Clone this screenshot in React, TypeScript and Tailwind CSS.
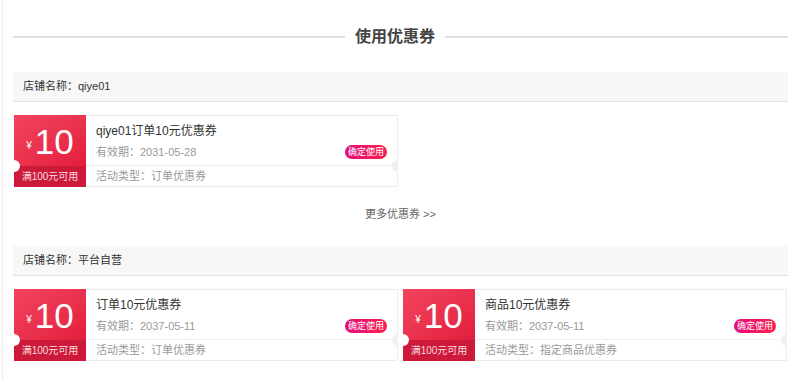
import React from "react";

type Coupon = {
  title: string;
  date: string;
  type: string;
};

const font = "font-['Liberation_Sans','Noto_Sans_CJK_SC',sans-serif]";

const CouponCard = ({ c }: { c: Coupon }) => {
  return (
    <div className="relative flex h-[72px] overflow-hidden">
      {/* red amount block */}
      <div className="flex w-[72px] shrink-0 flex-col">
        <div className="flex h-[51px] items-center justify-center bg-gradient-to-br from-[#f2435f] to-[#e31c3d] pt-[2px] text-white">
          <span className="mr-[3px] mt-[8px] text-[10px]">¥</span>
          <span className="text-[35px] font-light leading-none">10</span>
        </div>
        <div className="flex h-[21px] items-center justify-center bg-[#cd1a3b] text-[10px] text-[#fbd9df]">
          满100元可用
        </div>
      </div>
      {/* info block */}
      <div className="flex flex-1 flex-col border-y border-r border-[#ececec]">
        <div className="flex h-[50px] flex-col border-b border-dotted border-[#dcdcdc] pl-[10px] pr-[10px]">
          <div className="pt-[7px] text-[12px] leading-[16px] text-[#333]">{c.title}</div>
          <div className="mt-[6px] flex items-center justify-between">
            <span className="text-[11px] leading-[14px] text-[#999]">有效期：{c.date}</span>
            <span className="flex h-[14px] w-[42px] items-center justify-center whitespace-nowrap rounded-full bg-gradient-to-r from-[#e4087c] to-[#fd1f48] text-[9px] leading-none text-white">
              确定使用
            </span>
          </div>
        </div>
        <div className="flex flex-1 items-center pl-[10px] text-[11px] text-[#999]">
          活动类型：{c.type}
        </div>
      </div>
      {/* notches */}
      <div className="absolute left-[-6px] top-[45px] h-[12px] w-[12px] rounded-full bg-white" />
      <div className="absolute right-[-6px] top-[45px] h-[12px] w-[12px] rounded-full bg-[#f0f0f0]" />
    </div>
  );
};

const StoreHeader = ({ name }: { name: string }) => (
  <div className="flex h-[30px] items-center border-b border-[#e3e3e3] bg-[#f7f7f7] pl-[10px] text-[11px] text-[#333]">
    店铺名称：{name}
  </div>
);

const App = () => {
  return (
    <div className={`min-h-[381px] w-[800px] bg-white ${font}`}>
      <div className="ml-[2px] min-h-[381px] border-l border-[#ececec] pl-[10px]">
        <div className="w-[775px]">
          {/* title */}
          <div className="flex items-center pt-[26px]">
            <div className="h-[2px] flex-1 bg-[#e0e0e0]" />
            <div className="px-[10px] text-[16px] font-bold leading-[22px] text-[#444]">使用优惠券</div>
            <div className="h-[2px] w-[343px] bg-[#e0e0e0]" />
          </div>

          {/* store 1 */}
          <div className="mt-[24px]">
            <StoreHeader name="qiye01" />
          </div>
          <div className="mt-[13px] grid grid-cols-2 gap-[5px] px-[1px]">
            <CouponCard c={{ title: "qiye01订单10元优惠券", date: "2031-05-28", type: "订单优惠券" }} />
          </div>

          <div className="pb-[24px] pt-[19px] text-center text-[11px] leading-[16px] text-[#666]">
            更多优惠券 &gt;&gt;
          </div>

          {/* store 2 */}
          <StoreHeader name="平台自营" />
          <div className="mt-[13px] grid grid-cols-2 gap-[5px] px-[1px]">
            <CouponCard c={{ title: "订单10元优惠券", date: "2037-05-11", type: "订单优惠券" }} />
            <CouponCard c={{ title: "商品10元优惠券", date: "2037-05-11", type: "指定商品优惠券" }} />
          </div>
        </div>
      </div>
    </div>
  );
};

export default App;
